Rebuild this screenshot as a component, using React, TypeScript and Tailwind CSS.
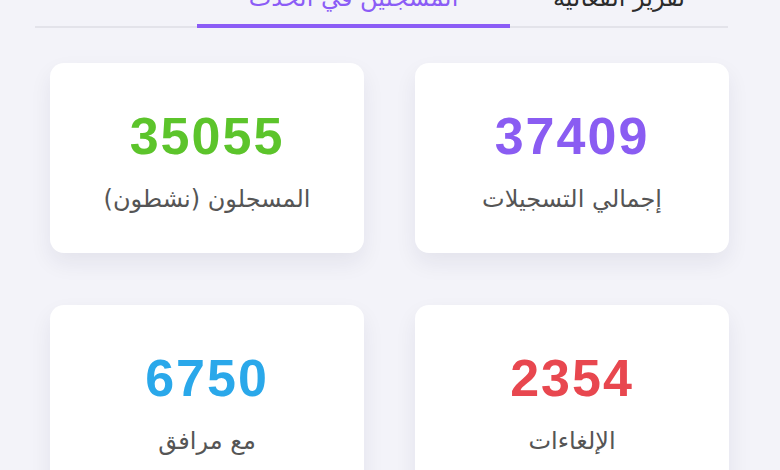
import React from "react";

const cards = [
  { value: "37409", label: "إجمالي التسجيلات", color: "text-[#8a5cf2]" },
  { value: "35055", label: "المسجلون (نشطون)", color: "text-[#5cc42b]" },
  { value: "2354", label: "الإلغاءات", color: "text-[#e8474f]" },
  { value: "6750", label: "مع مرافق", color: "text-[#2aa8ea]" },
];

export default function App() {
  return (
    <div
      dir="rtl"
      className="w-[780px] h-[470px] overflow-hidden bg-[#f3f3f9]"
      style={{ fontFamily: '"DejaVu Sans", "Liberation Sans", sans-serif' }}
    >
      <div className="ml-[35px] mr-[52px] -mt-[17px] flex border-b-2 border-[#e3e3ea]">
        <div className="w-[218px] text-center text-[24px] leading-[30px] pb-[13px] text-[#2b2b2b]">
          تقرير الفعالية
        </div>
        <div className="w-[313px] text-center text-[24px] leading-[30px] pb-[11px] -mb-[2px] text-[#8b5cf6] border-b-4 border-[#8b5cf6]">
          المسجلين في الحدث
        </div>
      </div>
      <div className="grid grid-cols-2 gap-x-[51px] gap-y-[52px] pr-[51px] pl-[50px] pt-[35px]">
        {cards.map((c) => (
          <div
            key={c.value}
            className="h-[190px] bg-white rounded-[14px] shadow-[0_10px_22px_rgba(30,30,70,0.07)] flex flex-col items-center pt-[47px]"
          >
            <div
              className={`${c.color} font-bold text-[52px] leading-[52px] tracking-[2px]`}
              style={{ fontFamily: '"Liberation Sans", Arial, sans-serif' }}
            >
              {c.value}
            </div>
            <div className="mt-[22px] text-[24px] leading-[30px] text-[#555]">
              {c.label}
            </div>
          </div>
        ))}
      </div>
    </div>
  );
}
